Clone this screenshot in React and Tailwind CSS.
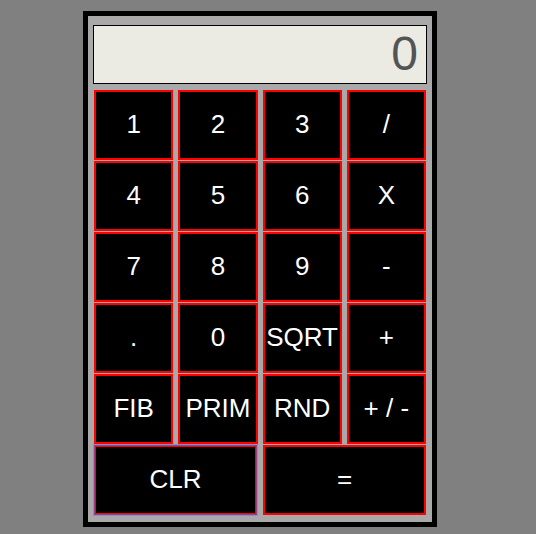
const keys = [
  '1', '2', '3', '/',
  '4', '5', '6', 'X',
  '7', '8', '9', '-',
  '.', '0', 'SQRT', '+',
  'FIB', 'PRIM', 'RND', '+ / -',
];

function Key({ label, className = '' }) {
  return (
    <button
      type="button"
      className={`h-[70px] min-w-0 whitespace-nowrap border-2 border-[#ff0000] bg-black pb-0.5 text-center text-[26px] leading-8 text-white ${className}`}
    >
      {label}
    </button>
  );
}

export default function App() {
  return (
    <main className="min-h-screen bg-[#808080] pt-[11px] pr-4 font-['Liberation_Sans',Arial,sans-serif]">
      <div className="mx-auto max-w-[354px] border-[5px] border-black bg-[#a9a9a9] px-[5px] pt-[9px] pb-[7px]">
        <input
          type="text"
          readOnly
          aria-label="Result"
          value="0"
          className="block h-[59px] w-full border border-black bg-[#ebebe4] px-2 pb-0.5 text-right text-5xl text-[#545454] outline-none"
        />
        <div className="mx-px mt-1.5 grid grid-cols-4 gap-x-[5px] gap-y-px">
          {keys.map((label) => (
            <Key key={label} label={label} />
          ))}
        </div>
        <div className="mx-px mt-px grid grid-cols-2 gap-1.5">
          <Key label="CLR" className="outline-2 -outline-offset-1 outline-[#4d79ff]/50" />
          <Key label="=" />
        </div>
      </div>
    </main>
  );
}
